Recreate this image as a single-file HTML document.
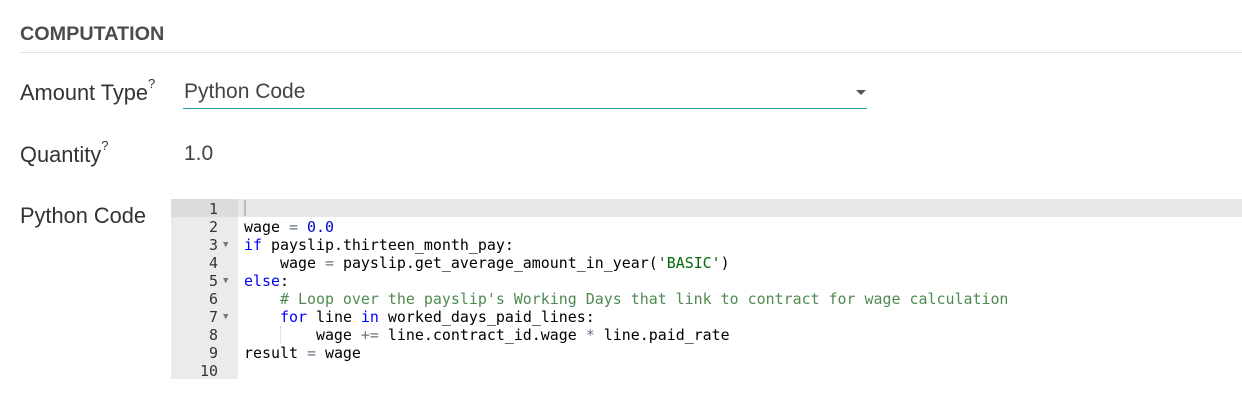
<!DOCTYPE html>
<html><head><style>
body{margin:0;width:1242px;height:419px;background:#fff;font-family:"Liberation Sans",sans-serif;color:#4c4c4c;position:relative;overflow:hidden}
.a{position:absolute}
.lbl{font-size:21.8px;color:#333}
sup{font-size:13px;position:relative;top:-4px;vertical-align:top}
.code{position:absolute;left:171px;top:199px;width:1071px;height:180px;font-family:"DejaVu Sans Mono",monospace;font-size:14.95px;line-height:18px}
.g{position:absolute;left:0;top:0;width:67px;height:180px;background:#ebebeb}
.ln{position:absolute;left:0;width:47px;text-align:right;color:#333}
.t{position:absolute;left:73px;color:#000;white-space:pre}
.k{color:#00f}.n{color:#00c}.c{color:#236e24;opacity:.8}.s{color:#036a07}.o{color:#687687}
.f{position:absolute;left:52px;font-size:9px;color:#777}
</style></head><body>
<div class="a" style="left:20px;top:23px;font-size:19.8px;font-weight:bold;color:#4c4c4c">COMPUTATION</div>
<div class="a" style="left:20px;top:52px;width:1222px;height:1px;background:#e2e2e2"></div>
<div class="a lbl" style="left:20px;top:80px">Amount Type<sup>?</sup></div>
<div class="a" style="left:184px;top:80px;font-size:21px;color:#444">Python Code</div>
<div class="a" style="left:856px;top:90px;width:0;height:0;border-left:5px solid transparent;border-right:5px solid transparent;border-top:5px solid #555"></div>
<div class="a" style="left:183px;top:108px;width:684px;height:1px;background:#21a3a6"></div>
<div class="a lbl" style="left:20px;top:142px">Quantity<sup>?</sup></div>
<div class="a" style="left:184px;top:142px;font-size:21px;color:#444">1.0</div>
<div class="a lbl" style="left:20px;top:203px">Python Code</div>
<div class="code">
<div class="a" style="left:0;top:0;width:1071px;height:18px;background:#e8e8e8"></div>
<div class="g"></div>
<div class="a" style="left:0;top:0;width:67px;height:18px;background:#dcdcdc"></div>
<div class="a" style="left:73px;top:1px;width:2px;height:16px;background:#bbb"></div>
<div style="position:absolute;left:0;top:1px;width:1071px">
<div class="ln" style="top:0">1</div><div class="ln" style="top:18px">2</div><div class="ln" style="top:36px">3</div><div class="ln" style="top:54px">4</div><div class="ln" style="top:72px">5</div><div class="ln" style="top:90px">6</div><div class="ln" style="top:108px">7</div><div class="ln" style="top:126px">8</div><div class="ln" style="top:144px">9</div><div class="ln" style="top:162px">10</div>
<div class="f" style="top:36px">▼</div><div class="f" style="top:72px">▼</div><div class="f" style="top:108px">▼</div>
<div class="a" style="left:109px;top:126px;width:1px;height:18px;border-left:1px dotted #ccc"></div>
<div class="t" style="top:18px">wage <span class="o">=</span> <span class="n">0.0</span></div>
<div class="t" style="top:36px"><span class="k">if</span> payslip.thirteen_month_pay:</div>
<div class="t" style="top:54px">    wage <span class="o">=</span> payslip.get_average_amount_in_year(<span class="s">'BASIC'</span>)</div>
<div class="t" style="top:72px"><span class="k">else</span>:</div>
<div class="t" style="top:90px">    <span class="c"># Loop over the payslip's Working Days that link to contract for wage calculation</span></div>
<div class="t" style="top:108px">    <span class="k">for</span> line <span class="k">in</span> worked_days_paid_lines:</div>
<div class="t" style="top:126px">        wage <span class="o">+=</span> line.contract_id.wage <span class="o">*</span> line.paid_rate</div>
<div class="t" style="top:144px">result <span class="o">=</span> wage</div>
</div>
</div>
</body></html>
